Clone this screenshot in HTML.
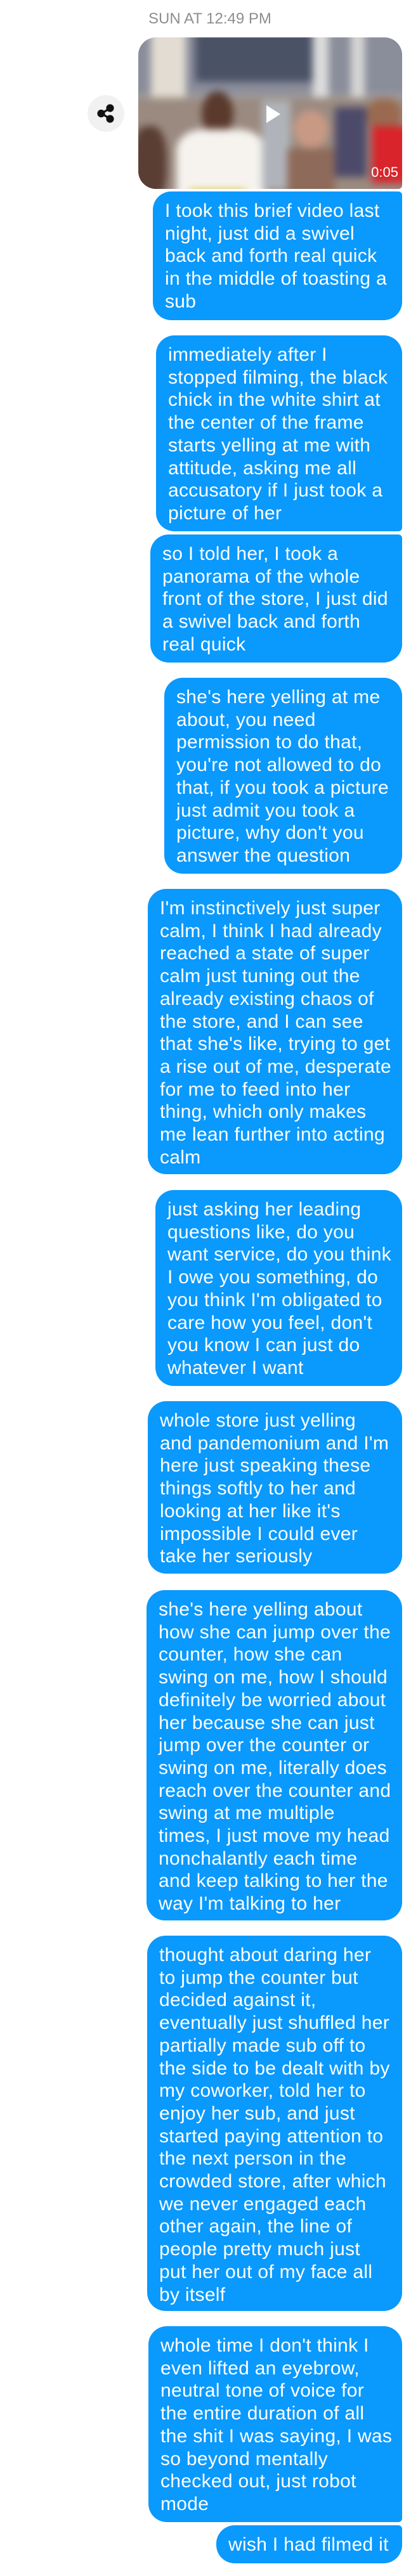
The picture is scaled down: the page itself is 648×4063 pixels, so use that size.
<!DOCTYPE html>
<html><head><meta charset="utf-8"><style>
*{margin:0;padding:0;box-sizing:border-box}
html,body{width:648px;height:4063px;background:#fff;overflow:hidden}
body{position:relative;font-family:"Liberation Sans",Arial,sans-serif}
.ts{position:absolute;top:16px;left:0;width:648px;font-size:24px;color:#8e8e8e}
.ts span{position:absolute;left:234px;width:180px;text-align:center;white-space:nowrap}
.b{position:absolute;right:14px;background:#0a99fd;color:#fff;border-radius:29px;font-size:30px;line-height:35.7px;padding:13px 0 0 19px;white-space:nowrap;letter-spacing:0.3px}
.vid{position:absolute;left:218px;top:59px;width:416px;height:239px;border-radius:28px 28px 6px 28px;overflow:hidden;background:#a9a6a6}
.vid .in{position:absolute;inset:-10px;filter:blur(6px)}
.vid .in div{position:absolute}
.share{position:absolute;left:138px;top:150px;width:58px;height:58px;border-radius:50%;background:#f1f1f1}
</style></head><body>
<div class="ts"><span>SUN AT 12:49 PM</span></div>
<div class="share"><svg width="58" height="58" viewBox="0 0 58 58"><g fill="#111" stroke="#111" stroke-width="3.2"><line x1="22" y1="29" x2="35" y2="21"/><line x1="22" y1="29" x2="35" y2="37"/><circle cx="21.5" cy="29" r="4.5"/><circle cx="35.5" cy="20.5" r="4.5"/><circle cx="35.5" cy="37.5" r="4.5"/></g></svg></div>
<div class="vid"><div class="in">
<div style="left:0;top:0;width:440px;height:100px;background:#8a8d9a"></div>
<div style="left:100px;top:0;width:200px;height:80px;background:#4a5266"></div>
<div style="left:30px;top:0;width:55px;height:180px;background:#e2dcd2"></div>
<div style="left:285px;top:0;width:25px;height:150px;background:#dcdcdc"></div>
<div style="left:345px;top:0;width:22px;height:140px;background:#d6d6d6"></div>
<div style="left:0;top:105px;width:440px;height:160px;background:#9a8a80"></div>
<div style="left:0;top:150px;width:55px;height:120px;background:#5a3e33;border-radius:40%"></div>
<div style="left:110px;top:95px;width:50px;height:70px;background:#5a3a2c;border-radius:50%"></div>
<div style="left:70px;top:155px;width:140px;height:110px;background:#f6f3ef;border-radius:30% 30% 0 0"></div>
<div style="left:205px;top:110px;width:45px;height:140px;background:#b0b4ba"></div>
<div style="left:255px;top:125px;width:55px;height:60px;background:#c89a84;border-radius:50%"></div>
<div style="left:245px;top:185px;width:75px;height:80px;background:#8e6a5a"></div>
<div style="left:320px;top:120px;width:50px;height:110px;background:#4c4a6a"></div>
<div style="left:370px;top:105px;width:55px;height:55px;background:#9a6a50;border-radius:50%"></div>
<div style="left:378px;top:150px;width:60px;height:90px;background:#d8242a"></div>
<div style="left:90px;top:250px;width:90px;height:20px;background:#d8c040"></div>
</div>
<svg style="position:absolute;left:200px;top:105px" width="26" height="32" viewBox="0 0 26 32"><path d="M2 2 L24 16 L2 30 Z" fill="#fff"/></svg>
<div style="position:absolute;right:6px;top:200px;color:#fff;font-size:22px">0:05</div>
</div>

<div class="b" style="top:302px;left:241px;height:203px;border-top-right-radius:6px">I took this brief video last<br>night, just did a swivel<br>back and forth real quick<br>in the middle of toasting a<br>sub</div>

<div class="b" style="top:529px;left:246px;height:309px;border-bottom-right-radius:6px">immediately after I<br>stopped filming, the black<br>chick in the white shirt at<br>the center of the frame<br>starts yelling at me with<br>attitude, asking me all<br>accusatory if I just took a<br>picture of her</div>

<div class="b" style="top:843px;left:237px;height:202px;border-top-right-radius:6px">so I told her, I took a<br>panorama of the whole<br>front of the store, I just did<br>a swivel back and forth<br>real quick</div>

<div class="b" style="top:1069px;left:259px;height:309px">she's here yelling at me<br>about, you need<br>permission to do that,<br>you're not allowed to do<br>that, if you took a picture<br>just admit you took a<br>picture, why don't you<br>answer the question</div>

<div class="b" style="top:1402px;left:233px;height:450px">I'm instinctively just super<br>calm, I think I had already<br>reached a state of super<br>calm just tuning out the<br>already existing chaos of<br>the store, and I can see<br>that she's like, trying to get<br>a rise out of me, desperate<br>for me to feed into her<br>thing, which only makes<br>me lean further into acting<br>calm</div>

<div class="b" style="top:1877px;left:245px;height:309px">just asking her leading<br>questions like, do you<br>want service, do you think<br>I owe you something, do<br>you think I'm obligated to<br>care how you feel, don't<br>you know I can just do<br>whatever I want</div>

<div class="b" style="top:2210px;left:233px;height:272px">whole store just yelling<br>and pandemonium and I'm<br>here just speaking these<br>things softly to her and<br>looking at her like it's<br>impossible I could ever<br>take her seriously</div>

<div class="b" style="top:2508px;left:231px;height:521px">she's here yelling about<br>how she can jump over the<br>counter, how she can<br>swing on me, how I should<br>definitely be worried about<br>her because she can just<br>jump over the counter or<br>swing on me, literally does<br>reach over the counter and<br>swing at me multiple<br>times, I just move my head<br>nonchalantly each time<br>and keep talking to her the<br>way I'm talking to her</div>

<div class="b" style="top:3053px;left:232px;height:592px">thought about daring her<br>to jump the counter but<br>decided against it,<br>eventually just shuffled her<br>partially made sub off to<br>the side to be dealt with by<br>my coworker, told her to<br>enjoy her sub, and just<br>started paying attention to<br>the next person in the<br>crowded store, after which<br>we never engaged each<br>other again, the line of<br>people pretty much just<br>put her out of my face all<br>by itself</div>

<div class="b" style="top:3669px;left:234px;height:309px;border-bottom-right-radius:6px">whole time I don't think I<br>even lifted an eyebrow,<br>neutral tone of voice for<br>the entire duration of all<br>the shit I was saying, I was<br>so beyond mentally<br>checked out, just robot<br>mode</div>

<div class="b" style="top:3983px;left:341px;height:60px;border-top-right-radius:6px">wish I had filmed it</div>
</body></html>
